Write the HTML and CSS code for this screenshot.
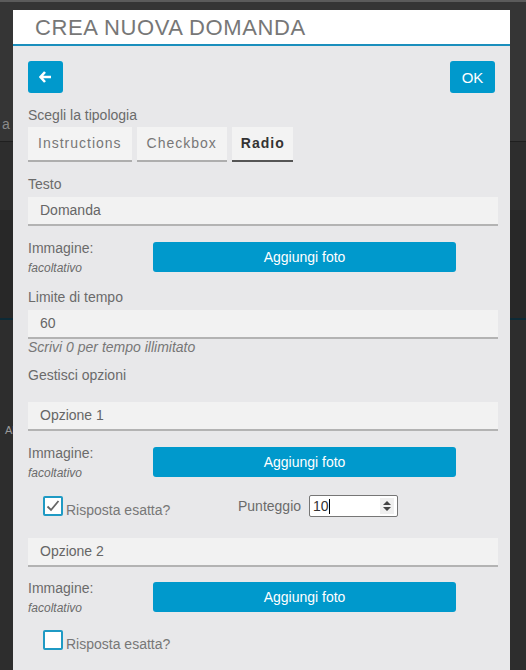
FILE: index.html
```html
<!DOCTYPE html>
<html lang="it">
<head>
<meta charset="utf-8">
<title>Crea nuova domanda</title>
<link rel="stylesheet" href="styles.css">
</head>
<body>
<div class="backdrop">
  <div class="bd-topline"></div>
  <div class="bd-navy"></div>
  <div class="bd-band1"></div>
  <div class="bd-band2"></div>
  <div class="bd-line"></div>
  <div class="bd-blueline"></div>
  <span class="bd-a">a</span>
  <span class="bd-al">Al</span>
</div>

<div class="modal">
  <div class="modal-header">
    <h1 class="modal-title">Crea nuova domanda</h1>
  </div>
  <div class="modal-body">
    <div class="toolbar">
      <button class="btn btn-icon" aria-label="Indietro">
        <svg width="13" height="12" viewBox="0 0 13 12"><path d="M6 1 L1.5 6 L6 11 M2 6 H12" fill="none" stroke="#fff" stroke-width="2.6" stroke-linejoin="miter"/></svg>
      </button>
      <button class="btn btn-ok">OK</button>
    </div>

    <div class="label l-type">Scegli la tipologia</div>
    <div class="tabs">
      <div class="tab">Instructions</div>
      <div class="tab">Checkbox</div>
      <div class="tab active">Radio</div>
    </div>

    <div class="label l-testo">Testo</div>
    <div class="field">Domanda</div>

    <div class="img-row r1">
      <div class="img-label"><div>Immagine:</div><div class="opt">facoltativo</div></div>
      <button class="btn btn-photo">Aggiungi foto</button>
    </div>

    <div class="label l-limite">Limite di tempo</div>
    <div class="field">60</div>
    <div class="help">Scrivi 0 per tempo illimitato</div>

    <div class="label l-gest">Gestisci opzioni</div>
    <div class="field f-opt1">Opzione 1</div>

    <div class="img-row r2">
      <div class="img-label"><div>Immagine:</div><div class="opt">facoltativo</div></div>
      <button class="btn btn-photo">Aggiungi foto</button>
    </div>

    <div class="check-row c1">
      <label class="check">
        <span class="box">
          <svg width="16" height="16" viewBox="0 0 16 16"><path d="M2.5 8.5 L6 12 L13.5 3" fill="none" stroke="#666" stroke-width="1.8"/></svg>
        </span>
        <span class="check-text">Risposta esatta?</span>
      </label>
      <span class="score-label">Punteggio</span>
      <div class="number">
        <span class="num-val">10</span><span class="caret"></span>
        <span class="spin">
          <svg width="10" height="14" viewBox="0 0 10 14"><path d="M5 2 L9 6 H1 Z M5 12 L9 8 H1 Z" fill="#444"/></svg>
        </span>
      </div>
    </div>

    <div class="field f-opt2">Opzione 2</div>

    <div class="img-row r3">
      <div class="img-label"><div>Immagine:</div><div class="opt">facoltativo</div></div>
      <button class="btn btn-photo">Aggiungi foto</button>
    </div>

    <div class="check-row c2">
      <label class="check">
        <span class="box"></span>
        <span class="check-text">Risposta esatta?</span>
      </label>
    </div>
  </div>
</div>
</body>
</html>
```

FILE: styles.css
```css
html, body {
  margin: 0;
  padding: 0;
}
body {
  width: 526px;
  height: 670px;
  overflow: hidden;
  background: #2d2d2d;
  font-family: "Liberation Sans", Arial, sans-serif;
  position: relative;
}

/* page behind the overlay */
.backdrop {
  position: absolute;
  inset: 0;
}
.bd-topline {
  position: absolute; left: 0; top: 0; width: 526px; height: 2px; background: #5b5b5b;
}
.bd-navy {
  position: absolute; left: 314px; top: 2px; width: 191px; height: 8px; background: #001c25;
}
.bd-band1 {
  position: absolute; left: 0; top: 2px; width: 526px; height: 140px; background: #353535;
}
.bd-band2 {
  position: absolute; left: 0; top: 210px; width: 526px; height: 108px; background: #282828;
}
.bd-line {
  position: absolute; left: 0; top: 141px; width: 526px; height: 1px; background: #1f1f1f;
}
.bd-blueline {
  position: absolute; left: 0; top: 318px; width: 526px; height: 2px; background: #0d2a36;
}
.bd-a {
  position: absolute; left: 2px; top: 116px; font-size: 14px; color: #8a8a8a;
}
.bd-al {
  position: absolute; left: 5px; top: 424px; font-size: 11px; color: #9a9a9a;
}

/* modal */
.modal {
  position: absolute;
  left: 13px;
  top: 10px;
  width: 497px;
  height: 680px;
  background: #e8e8ea;
  overflow: hidden;
}
.modal-header {
  background: #fff;
  height: 34px;
  border-bottom: 2px solid #1b8fbd;
  padding-left: 22px;
  display: flex;
  align-items: center;
}
.modal-title {
  margin: 0;
  font-weight: normal;
  font-size: 22px;
  letter-spacing: 0.6px;
  text-transform: uppercase;
  color: #777;
  line-height: 34px;
  padding-top: 1px;
}
.modal-body {
  padding: 15px 12px 0 15px;
}

.btn {
  border: none;
  background: #0099cc;
  color: #fff;
  font-family: "Liberation Sans", Arial, sans-serif;
  border-radius: 3px;
  padding: 0;
  cursor: pointer;
}
.toolbar {
  display: flex;
  justify-content: space-between;
  height: 32px;
  padding-right: 3px;
}
.btn-icon {
  width: 35px;
  height: 32px;
  display: flex;
  align-items: center;
  justify-content: center;
}
.btn-ok {
  width: 45px;
  height: 32px;
  font-size: 15px;
}

.label {
  font-size: 14px;
  line-height: 16px;
  color: #6b6b6b;
}
.l-type { margin-top: 14px; }
.l-testo { margin-top: 14px; }
.l-limite { margin-top: 17px; }
.l-gest { margin-top: 12px; }

.tabs {
  display: flex;
  gap: 5px;
  margin-top: 4px;
}
.tab {
  height: 33px;
  line-height: 33px;
  padding: 0 10px;
  background: #f3f3f3;
  border-bottom: 2px solid #aeaeae;
  font-size: 14px;
  letter-spacing: 1px;
  color: #777;
}
.tab.active {
  font-weight: bold;
  color: #333;
  border-bottom-color: #555;
  padding: 0 8px 0 9px;
}

.field {
  margin-top: 5px;
  height: 27px;
  line-height: 27px;
  background: #f2f2f2;
  border-bottom: 2px solid #b3b3b3;
  padding-left: 12px;
  font-size: 14px;
  color: #666;
}
.f-opt1 { margin-top: 19px; }
.f-opt2 { margin-top: 21px; }

.help {
  font-size: 14px;
  font-style: italic;
  line-height: 16px;
  color: #777;
}

.img-row {
  display: flex;
  height: 30px;
  margin-top: 16px;
}
.r3 { margin-top: 15px; }
.img-label {
  width: 125px;
  font-size: 14px;
  color: #6b6b6b;
  margin-top: -2px;
  line-height: 16px;
}
.img-label .opt {
  font-size: 12px;
  font-style: italic;
  line-height: 14px;
  margin-top: 5px;
}
.btn-photo {
  width: 303px;
  height: 30px;
  font-size: 14px;
}

.check-row {
  display: flex;
  align-items: center;
  height: 22px;
  margin-top: 18px;
  padding-left: 15px;
}
.c2 { margin-top: 17px; }
.check {
  display: flex;
  align-items: center;
  width: 195px;
}
.box {
  width: 16px;
  height: 16px;
  border: 2px solid #1f9ac4;
  border-radius: 2px;
  background: #fff;
  display: flex;
}
.check-text {
  margin-left: 3px;
  margin-top: 8px;
  font-size: 14px;
  color: #777;
}
.score-label {
  font-size: 14px;
  color: #6b6b6b;
  width: 71px;
}
.number {
  width: 84px;
  height: 20px;
  border: 1px solid #767676;
  border-radius: 2px;
  background: #fff;
  display: flex;
  align-items: center;
  padding-left: 3px;
  box-sizing: content-box;
  position: relative;
}
.num-val {
  font-size: 14px;
  color: #333;
}
.caret {
  width: 1px;
  height: 15px;
  background: #000;
}
.spin {
  position: absolute;
  right: 3px;
  top: 2px;
  width: 14px;
  height: 16px;
  background: #efefef;
  display: flex;
  align-items: center;
  justify-content: center;
}
```
